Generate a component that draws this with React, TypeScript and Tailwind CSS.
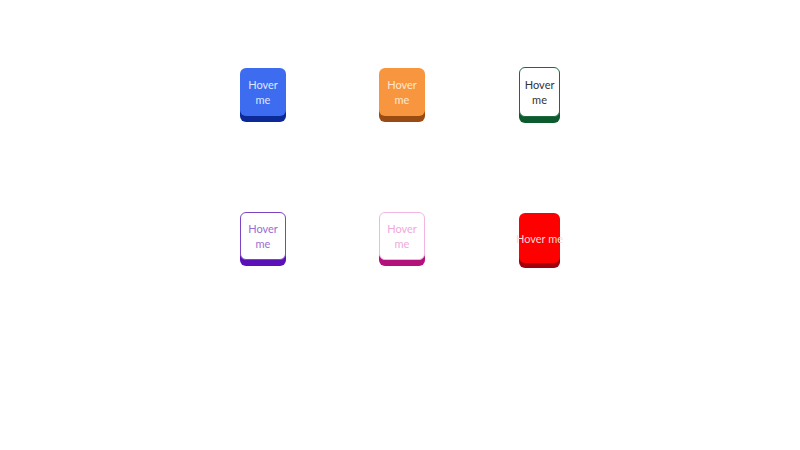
const buttons = [
  {
    id: "blue",
    className:
      "w-[46px] h-[48px] px-[7px] bg-[#3d6cf1] text-[#dfe6ff] shadow-[0_6px_0_#0c2a97]",
  },
  {
    id: "orange",
    className:
      "w-[46px] h-[48px] px-[7px] bg-[#f8963f] text-[#ffe6cf] shadow-[0_6px_0_#9a4b12]",
  },
  {
    id: "green",
    className:
      "w-[41px] h-[50px] px-[7px] bg-white border border-[#1d6a3d] text-[#333333] shadow-[0_6px_0_#0e5a2f]",
  },
  {
    id: "purple",
    className:
      "w-[46px] h-[48px] px-[7px] bg-white border border-[#7d45c4] text-[#9a6ed3] shadow-[0_6px_0_#5a12b8]",
  },
  {
    id: "pink",
    className:
      "w-[46px] h-[48px] px-[7px] bg-white border border-[#f1b6e1] text-[#f0a9d9] shadow-[0_6px_0_#b3127d]",
  },
  {
    id: "red",
    className:
      "mt-[4px] w-[41px] h-[50px] px-0 bg-[#ff0000] text-[#ffd6d6] text-[10px] shadow-[0_5px_0_#a3000f] whitespace-nowrap",
  },
]

export default function App() {
  return (
    <div className="w-[800px] h-[450px] bg-white font-['Lato',sans-serif]">
      <div className="ml-[193px] grid w-[415px] grid-cols-[140px_138px_137px] pt-[20px]">
        {buttons.map((b) => (
          <div key={b.id} className="flex h-[144px] items-center justify-center">
            <button
              className={`flex items-center justify-center rounded-[6px] text-center text-[11px] font-normal leading-[15px] ${b.className}`}
            >
              Hover me
            </button>
          </div>
        ))}
      </div>
    </div>
  )
}
